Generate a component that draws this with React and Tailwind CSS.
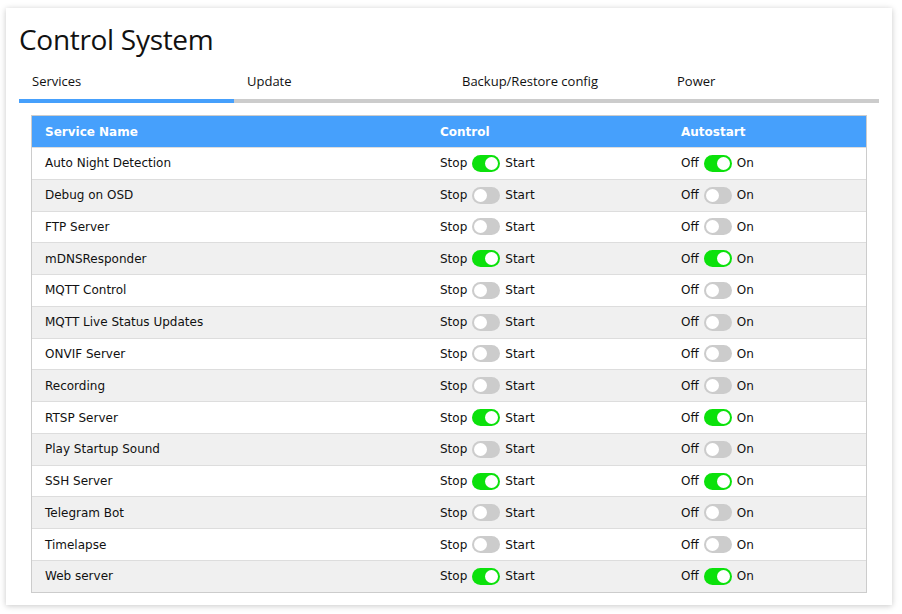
import React from "react";

const rows = [
  ["Auto Night Detection", true, true],
  ["Debug on OSD", false, false],
  ["FTP Server", false, false],
  ["mDNSResponder", true, true],
  ["MQTT Control", false, false],
  ["MQTT Live Status Updates", false, false],
  ["ONVIF Server", false, false],
  ["Recording", false, false],
  ["RTSP Server", true, true],
  ["Play Startup Sound", false, false],
  ["SSH Server", true, true],
  ["Telegram Bot", false, false],
  ["Timelapse", false, false],
  ["Web server", true, true],
];

function Toggle({ on }) {
  return (
    <span
      className={
        "mx-[5px] inline-flex h-[17px] w-[28px] items-center rounded-full px-[2px] " +
        (on ? "justify-end bg-[#0be10b]" : "justify-start bg-[#cccccc]")
      }
    >
      <span className="block h-[13px] w-[13px] rounded-full bg-white" />
    </span>
  );
}

const tabs = ["Services", "Update", "Backup/Restore config", "Power"];

export default function App() {
  return (
    <div className="min-h-[614px] w-[902px] bg-white pt-[8px] pl-[6px]">
      <div
        className="w-[886px] bg-white px-[13px] pb-[12px] pt-[12px] shadow-[0_1px_6px_rgba(0,0,0,0.22)]"
      >
        <div
          className="h-[39px] text-[28px] leading-[38px] text-[#111] tracking-[-0.3px]"
          style={{ fontFamily: '"Open Sans", sans-serif' }}
        >
          Control System
        </div>
        <div className="mt-[4px] flex" style={{ fontFamily: '"Open Sans", sans-serif' }}>
          {tabs.map((t, i) => (
            <div
              key={t}
              className={
                "w-[215px] border-b-[4px] pl-[13px] pt-[9px] pb-[9px] text-[13px] leading-[18px] text-[#111] " +
                (i === 0 ? "border-[#46a0fc]" : "border-[#cccccc]")
              }
            >
              {t}
            </div>
          ))}
        </div>
        <div
          className="mx-[12px] mt-[12px] border border-[#cccccc] text-[12px] text-[#111]"
          style={{ fontFamily: '"DejaVu Sans", Verdana, sans-serif' }}
        >
          <div className="flex h-[31px] items-center bg-[#46a0fc] font-bold text-white">
            <div className="w-[395px] pl-[13px]">Service Name</div>
            <div className="w-[241px] pl-[13px]">Control</div>
            <div className="flex-1 pl-[13px]">Autostart</div>
          </div>
          {rows.map(([name, c, a], i) => (
            <div
              key={name}
              className={
                "flex h-[31.77px] items-center border-t border-[#dddddd] " +
                (i % 2 === 1 ? "bg-[#f0f0f0]" : "bg-white")
              }
            >
              <div className="w-[395px] pl-[13px]">{name}</div>
              <div className="flex w-[241px] items-center pl-[13px]">
                <span>Stop</span>
                <Toggle on={c} />
                <span>Start</span>
              </div>
              <div className="flex flex-1 items-center pl-[13px]">
                <span>Off</span>
                <Toggle on={a} />
                <span>On</span>
              </div>
            </div>
          ))}
        </div>
      </div>
    </div>
  );
}
